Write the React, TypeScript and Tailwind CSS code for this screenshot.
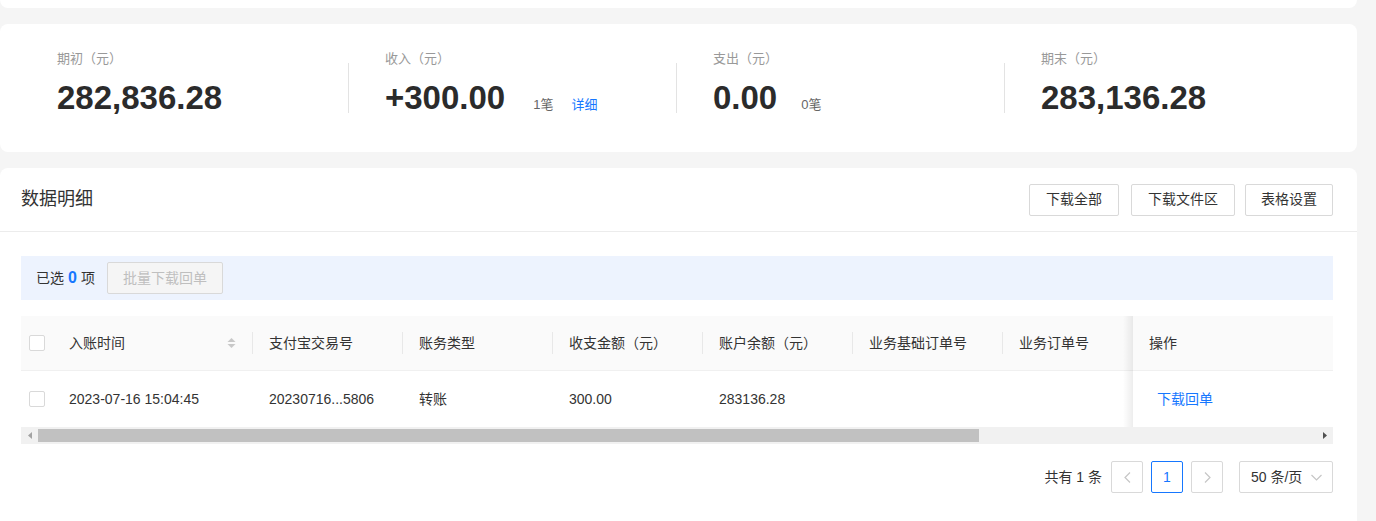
import React from "react";

const FONT = { fontFamily: '"Liberation Sans", "Noto Sans CJK SC", sans-serif' };

function Checkbox() {
  return <div className="w-[16px] h-[16px] border border-[#d9d9d9] rounded-[2px] bg-white" />;
}

function SortIcon() {
  return (
    <svg width="9" height="12" viewBox="0 0 9 12" className="mr-[16px]">
      <path d="M4.5 1 L8.5 5 L0.5 5 Z" fill="#c8c8c8" />
      <path d="M4.5 11 L8.5 7 L0.5 7 Z" fill="#c8c8c8" />
    </svg>
  );
}

function HeadCell({ w, children, sort, divider = true }: { w: string; children?: React.ReactNode; sort?: boolean; divider?: boolean }) {
  return (
    <div className={`${w} shrink-0 h-full flex items-center pl-[16px]`}>
      <span className="flex-1 whitespace-nowrap">{children}</span>
      {sort && <SortIcon />}
      {divider && <div className="w-px h-[22px] bg-[#e8e8e8]" />}
    </div>
  );
}

function BodyCell({ w, children }: { w: string; children?: React.ReactNode }) {
  return (
    <div className={`${w} shrink-0 h-full flex items-center pl-[16px] whitespace-nowrap`}>{children}</div>
  );
}

function Stat({ label, value, extra, first }: { label: string; value: string; extra?: React.ReactNode; first?: boolean }) {
  return (
    <div className="flex-1 flex items-start">
      <div className={`w-px h-[50px] mt-[14px] ${first ? "" : "bg-[#e3e3e3]"}`} />
      <div className="ml-[36px] flex flex-col">
        <div className="text-[13px] leading-[20px] text-[#999]">{label}</div>
        <div className="mt-[9px] flex items-baseline">
          <span className="text-[33px] leading-[40px] font-bold text-[#2b2b2b]">{value}</span>
          {extra}
        </div>
      </div>
    </div>
  );
}

export default function App() {
  return (
    <div className="w-[1376px] h-[521px] bg-[#f5f5f5] overflow-hidden text-[#333]" style={FONT}>
      <div className="w-[1357px]">
        <div className="h-[8px] bg-white rounded-b-lg" />

        <div className="mt-[16px] h-[128px] bg-white rounded-lg pl-[20px] pr-[25px] pt-[25px] flex">
          <Stat first label="期初（元）" value="282,836.28" />
          <Stat
            label="收入（元）"
            value="+300.00"
            extra={
              <>
                <span className="ml-[28px] text-[13px] text-[#666]">1笔</span>
                <span className="ml-[18px] text-[13px] text-[#1677ff]">详细</span>
              </>
            }
          />
          <Stat
            label="支出（元）"
            value="0.00"
            extra={<span className="ml-[24px] text-[13px] text-[#666]">0笔</span>}
          />
          <Stat label="期末（元）" value="283,136.28" />
        </div>

        <div className="mt-[16px] h-[353px] bg-white rounded-t-lg">
          <div className="h-[64px] pl-[21px] pr-[24px] flex items-center justify-between border-b border-[#ececec]">
            <div className="text-[18px] text-[#333]">数据明细</div>
            <div className="flex items-center">
              <button className="w-[90px] h-[32px] border border-[#d9d9d9] rounded-[2px] text-[14px] text-[#333] bg-white">下载全部</button>
              <button className="ml-[12px] w-[104px] h-[32px] border border-[#d9d9d9] rounded-[2px] text-[14px] text-[#333] bg-white">下载文件区</button>
              <button className="ml-[10px] w-[88px] h-[32px] border border-[#d9d9d9] rounded-[2px] text-[14px] text-[#333] bg-white">表格设置</button>
            </div>
          </div>

          <div className="pl-[21px] pr-[24px]">
            <div className="mt-[24px] h-[44px] bg-[#edf3fe] flex items-center pl-[15px] text-[14px]">
              <span>已选</span>
              <span className="mx-[4px] text-[16px] font-bold text-[#1677ff]">0</span>
              <span>项</span>
              <button className="ml-[12px] w-[116px] h-[32px] border border-[#d9d9d9] rounded-[2px] bg-[#f5f5f5] text-[14px] text-[#bfbfbf]">批量下载回单</button>
            </div>

            <div className="mt-[16px] flex text-[14px] text-[#333]">
              <div className="w-[1112px] overflow-hidden">
                <div className="w-[1250px]">
                  <div className="h-[55px] bg-[#fafafa] border-b border-[#f0f0f0] flex items-center">
                    <div className="w-[32px] shrink-0 flex justify-center"><Checkbox /></div>
                    <HeadCell w="w-[200px]" sort>入账时间</HeadCell>
                    <HeadCell w="w-[150px]">支付宝交易号</HeadCell>
                    <HeadCell w="w-[150px]">账务类型</HeadCell>
                    <HeadCell w="w-[150px]">收支金额（元）</HeadCell>
                    <HeadCell w="w-[150px]">账户余额（元）</HeadCell>
                    <HeadCell w="w-[150px]">业务基础订单号</HeadCell>
                    <HeadCell w="w-[150px]">业务订单号</HeadCell>
                  </div>
                  <div className="h-[56px] flex items-center">
                    <div className="w-[32px] shrink-0 flex justify-center"><Checkbox /></div>
                    <BodyCell w="w-[200px]">2023-07-16 15:04:45</BodyCell>
                    <BodyCell w="w-[150px]">20230716...5806</BodyCell>
                    <BodyCell w="w-[150px]">转账</BodyCell>
                    <BodyCell w="w-[150px]">300.00</BodyCell>
                    <BodyCell w="w-[150px]">283136.28</BodyCell>
                    <BodyCell w="w-[150px]" />
                    <BodyCell w="w-[150px]" />
                  </div>
                </div>
              </div>
              <div className="w-[200px] relative">
                <div className="absolute top-0 bottom-0 -left-[10px] w-[10px] bg-gradient-to-l from-[rgba(0,0,0,0.07)] to-transparent pointer-events-none" />
                <div className="h-[55px] bg-[#fafafa] border-b border-[#f0f0f0] flex items-center pl-[16px]">操作</div>
                <div className="h-[56px] flex items-center pl-[24px] text-[#1677ff]">下载回单</div>
              </div>
            </div>

            <div className="h-[17px] bg-[#f1f1f1] flex items-center">
              <div className="w-[17px] h-full flex items-center justify-center">
                <svg width="4" height="7" viewBox="0 0 4 7"><path d="M4 0 L0 3.5 L4 7 Z" fill="#a3a3a3" /></svg>
              </div>
              <div className="w-[941px] h-[13px] bg-[#c1c1c1]" />
              <div className="flex-1" />
              <div className="w-[17px] h-full flex items-center justify-center">
                <svg width="4" height="7" viewBox="0 0 4 7"><path d="M0 0 L4 3.5 L0 7 Z" fill="#505050" /></svg>
              </div>
            </div>

            <div className="mt-[17px] flex items-center justify-end text-[14px]">
              <span className="text-[#333] mr-[9px]">共有 1 条</span>
              <div className="w-[32px] h-[32px] border border-[#d9d9d9] rounded-[2px] flex items-center justify-center">
                <svg width="7" height="11" viewBox="0 0 7 11"><path d="M6 0.5 L1 5.5 L6 10.5" stroke="#c6c6c6" strokeWidth="1.2" fill="none" /></svg>
              </div>
              <div className="ml-[8px] w-[32px] h-[32px] border border-[#1677ff] rounded-[2px] flex items-center justify-center text-[#1677ff]">1</div>
              <div className="ml-[8px] w-[32px] h-[32px] border border-[#d9d9d9] rounded-[2px] flex items-center justify-center">
                <svg width="7" height="11" viewBox="0 0 7 11"><path d="M1 0.5 L6 5.5 L1 10.5" stroke="#c6c6c6" strokeWidth="1.2" fill="none" /></svg>
              </div>
              <div className="ml-[16px] w-[94px] h-[32px] border border-[#d9d9d9] rounded-[2px] flex items-center pl-[11px] pr-[10px]">
                <span className="flex-1 text-[#333]">50 条/页</span>
                <svg width="11" height="7" viewBox="0 0 11 7"><path d="M0.5 1 L5.5 6 L10.5 1" stroke="#c6c6c6" strokeWidth="1.2" fill="none" /></svg>
              </div>
            </div>
          </div>
        </div>
      </div>
    </div>
  );
}
